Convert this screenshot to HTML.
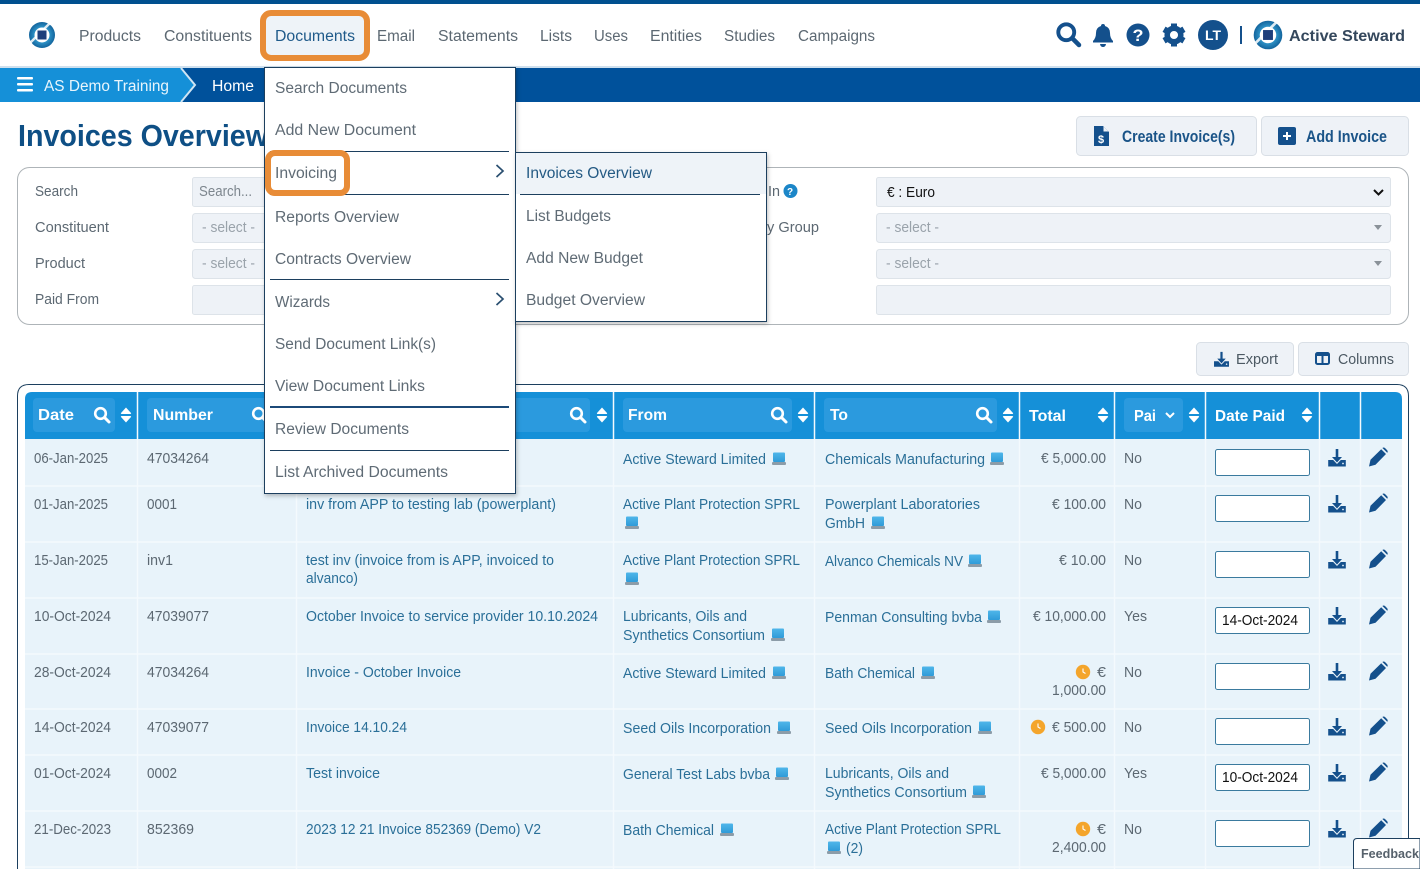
<!DOCTYPE html>
<html lang="en">
<head>
<meta charset="utf-8">
<title>Invoices Overview</title>
<style>
html,body{margin:0;padding:0;width:1420px;height:869px;overflow:hidden;background:#fff}
svg{display:block}
text{font-family:"Liberation Sans",Arial,sans-serif;font-size:15px;fill:#5c6872}
.n{font-size:15.5px;fill:#5c6872}
.m{font-size:15.5px;fill:#5f6b75}
.l{fill:#2a6f98}
.h{font-weight:bold;fill:#fff;font-size:15.5px}
.b{font-weight:bold;fill:#1a5488;font-size:16.5px}
.g{fill:#9aa3ab}
.d{fill:#4c5963}
</style>
</head>
<body>
<svg width="1420" height="869" viewBox="0 0 1420 869" xmlns="http://www.w3.org/2000/svg">
<defs>
<radialGradient id="lg" cx="50%" cy="50%" r="55%"><stop offset="0" stop-color="#7cc8ea"/><stop offset=".55" stop-color="#2b8fc4"/><stop offset="1" stop-color="#0d5a93"/></radialGradient>
<linearGradient id="sc" x1="0" y1="0" x2="0" y2="1"><stop offset="0" stop-color="#4fb6ea"/><stop offset="1" stop-color="#2f9bd8"/></linearGradient>
<g id="logo"><circle r="13" fill="url(#lg)"/><path d="M-12 8 L8 -12" stroke="#fff" stroke-width="2.5" opacity=".85"/><circle r="7.5" fill="#fff"/><rect x="-4.5" y="-4.5" width="9" height="9" fill="#1d3f7c"/></g>
<g id="srch" fill="none" stroke-linecap="round"><circle cx="-1.5" cy="-1.5" r="5.3" stroke-width="2.6"/><path d="M2.6 2.6 L7 7" stroke-width="3"/></g>
<g id="sort" fill="#fff"><path d="M0-7.5 L5-2 Q5.500-1 4-1 L-4-1 Q-5.500-1-5-2Z"/><path d="M0 7.500 L5 2 Q5.500 1 4 1 L-4 1 Q-5.500 1-5 2Z"/></g>
<g id="dl" fill="#14508c"><path d="M-1.300-9 H1.300 V-1 H5 L0 4.500 L-5-1 H-1.300Z"/><path d="M-8.800 2 H-3.800 L0 6 L3.800 2 H8.800 V8.500 H-8.800Z"/><circle cx="6" cy="5.500" r=".9" fill="#e8f3fa"/></g>
<path id="pen" fill="#14508c" d="M-9 9.500 L-7.500 2.800 L3.200-7.800 L8 -3 L-2.500 7.800Z M4.400-9 Q5.600-10 7-9 L9.200-6.800 Q10.200-5.400 9.200-4.200 Z"/>
<g id="lap"><rect x="-6" y="-6.500" width="12" height="9.500" rx="1" fill="url(#sc)"/><rect x="-7" y="3" width="14" height="3" rx="1" fill="#8c9ca8"/></g>
<g id="clk"><circle r="7.200" fill="#f4a52b"/><path d="M0-3.500 V0 L2.500 1.500" stroke="#fff" stroke-width="1.100" fill="none"/></g>
<path id="chev" d="M-3.500-6 L3 0 L-3.500 6" fill="none" stroke="#2a4f70" stroke-width="1.700"/>
</defs>

<!-- top -->
<rect width="1420" height="869" fill="#fff"/>
<rect width="1420" height="4" fill="#00508f"/>
<rect y="66" width="1420" height="2" fill="#cfe0ee"/>
<use href="#logo" x="42" y="35"/>
<text class="n" x="79" y="41" textLength="62" lengthAdjust="spacingAndGlyphs">Products</text>
<text class="n" x="164" y="41" textLength="88" lengthAdjust="spacingAndGlyphs">Constituents</text>
<rect x="263" y="13" width="104" height="45" rx="8" fill="#eef3f8" stroke="#e88c37" stroke-width="6"/>
<text class="n" x="275" y="41" textLength="80" lengthAdjust="spacingAndGlyphs" style="fill:#1f5a8a">Documents</text>
<text class="n" x="377" y="41" textLength="38" lengthAdjust="spacingAndGlyphs">Email</text>
<text class="n" x="438" y="41" textLength="80" lengthAdjust="spacingAndGlyphs">Statements</text>
<text class="n" x="540" y="41" textLength="32" lengthAdjust="spacingAndGlyphs">Lists</text>
<text class="n" x="594" y="41" textLength="34" lengthAdjust="spacingAndGlyphs">Uses</text>
<text class="n" x="650" y="41" textLength="52" lengthAdjust="spacingAndGlyphs">Entities</text>
<text class="n" x="724" y="41" textLength="51" lengthAdjust="spacingAndGlyphs">Studies</text>
<text class="n" x="798" y="41" textLength="77" lengthAdjust="spacingAndGlyphs">Campaigns</text>

<!-- right icons -->
<g transform="translate(1068.500 34.500) scale(1.500)" stroke="#14508c"><use href="#srch"/></g>
<path fill="#14508c" d="M1103 24 Q1105 24 1105 26 Q1110 27.500 1110 33 Q1110 38 1113 41 V42.500 H1093 V41 Q1096 38 1096 33 Q1096 27.500 1101 26 Q1101 24 1103 24Z M1100 44 H1106 Q1105.500 47 1103 47 Q1100.500 47 1100 44Z"/>
<circle cx="1138" cy="35" r="11.500" fill="#14508c"/>
<text x="1132.500" y="41" textLength="11" lengthAdjust="spacingAndGlyphs" style="font-weight:bold;font-size:17px;fill:#fff">?</text>
<g transform="translate(1174 35)"><circle r="6.800" fill="none" stroke="#14508c" stroke-width="5.500"/><g fill="#14508c"><rect x="-3" y="-11.500" width="6" height="5"/><rect x="-3" y="-11.500" width="6" height="5" transform="rotate(60)"/><rect x="-3" y="-11.500" width="6" height="5" transform="rotate(120)"/><rect x="-3" y="-11.500" width="6" height="5" transform="rotate(180)"/><rect x="-3" y="-11.500" width="6" height="5" transform="rotate(240)"/><rect x="-3" y="-11.500" width="6" height="5" transform="rotate(300)"/></g></g>
<circle cx="1213" cy="35" r="15" fill="#14508c"/>
<text x="1205" y="40" textLength="16" lengthAdjust="spacingAndGlyphs" style="font-weight:bold;font-size:14px;fill:#fff">LT</text>
<rect x="1240" y="26" width="2" height="18" fill="#14508c"/>
<use href="#logo" transform="translate(1268 35) scale(1.100)"/>
<text x="1289" y="41" textLength="116" lengthAdjust="spacingAndGlyphs" style="font-weight:bold;font-size:16px;fill:#34475c">Active Steward</text>

<!-- breadcrumb -->
<rect y="68" width="1420" height="34" fill="#00519b"/>
<path d="M0 68 H181 L195 85 L181 102 H0Z" fill="#1590d8"/>
<path d="M181 68 L195 85 L181 102" fill="none" stroke="#cfe4f3" stroke-width="2"/>
<rect x="17" y="77" width="16" height="2.500" rx="1" fill="#fff"/><rect x="17" y="83" width="16" height="2.500" rx="1" fill="#fff"/><rect x="17" y="89" width="16" height="2.500" rx="1" fill="#fff"/>
<text x="44" y="91" textLength="125" lengthAdjust="spacingAndGlyphs" style="font-size:15.500px;fill:#e8f5fc">AS Demo Training</text>
<text x="212" y="91" textLength="42" lengthAdjust="spacingAndGlyphs" style="font-size:15.500px;fill:#fff">Home</text>

<!-- title and buttons -->
<text x="18" y="146" textLength="250" lengthAdjust="spacingAndGlyphs" style="font-weight:bold;font-size:31px;fill:#0e4f85">Invoices Overview</text>
<rect x="1076.500" y="116.500" width="180" height="39" rx="4" fill="#eef2f7" stroke="#d9dfe6"/>
<rect x="1261.500" y="116.500" width="147" height="39" rx="4" fill="#eef2f7" stroke="#d9dfe6"/>
<path fill="#14508c" d="M1094 126 H1103 L1109 132 V146 H1094Z"/>
<path fill="#eef2f7" d="M1103.500 126.500 L1108.500 131.500 H1103.500Z"/>
<text x="1098" y="143" style="font-size:11px;font-weight:bold;fill:#fff">$</text>
<text class="b" x="1122" y="142" textLength="113" lengthAdjust="spacingAndGlyphs">Create Invoice(s)</text>
<rect x="1278" y="127" width="18" height="18" rx="2" fill="#14508c"/>
<path d="M1287 132 V140 M1283 136 H1291" stroke="#fff" stroke-width="2"/>
<text class="b" x="1306" y="142" textLength="81" lengthAdjust="spacingAndGlyphs">Add Invoice</text>

<!-- filters -->
<rect x="17.500" y="167.500" width="1391" height="157" rx="12" fill="#fff" stroke="#aeb4b8"/>
<text x="35" y="196" textLength="43" lengthAdjust="spacingAndGlyphs">Search</text>
<text x="35" y="232" textLength="74" lengthAdjust="spacingAndGlyphs">Constituent</text>
<text x="35" y="268" textLength="50" lengthAdjust="spacingAndGlyphs">Product</text>
<text x="35" y="304" textLength="64" lengthAdjust="spacingAndGlyphs">Paid From</text>
<g fill="#eef2f7" stroke="#dde3e9">
<rect x="192.500" y="177.500" width="100" height="29" rx="2"/>
<rect x="192.500" y="213.500" width="100" height="29" rx="3"/>
<rect x="192.500" y="249.500" width="100" height="29" rx="3"/>
<rect x="192.500" y="285.500" width="100" height="29" rx="2"/>
<rect x="876.500" y="177.500" width="514" height="29" rx="2"/>
<rect x="876.500" y="213.500" width="514" height="29" rx="3"/>
<rect x="876.500" y="249.500" width="514" height="29" rx="3"/>
<rect x="876.500" y="285.500" width="514" height="29" rx="2"/>
</g>
<text class="g" x="199" y="196" textLength="53" lengthAdjust="spacingAndGlyphs" style="fill:#7d868e">Search...</text>
<text class="g" x="202" y="232" textLength="53" lengthAdjust="spacingAndGlyphs">- select -</text>
<text class="g" x="202" y="268" textLength="53" lengthAdjust="spacingAndGlyphs">- select -</text>
<text x="768" y="196" textLength="12" lengthAdjust="spacingAndGlyphs">In</text>
<circle cx="790.500" cy="191" r="7" fill="#1c86c8"/>
<text x="787" y="195" style="font-size:10px;font-weight:bold;fill:#fff">?</text>
<text x="767" y="232" textLength="52" lengthAdjust="spacingAndGlyphs">y Group</text>
<text x="887" y="197" textLength="48" lengthAdjust="spacingAndGlyphs" style="fill:#111">€ : Euro</text>
<path d="M1374 190 L1378.500 194.500 L1383 190" fill="none" stroke="#111" stroke-width="2"/>
<text class="g" x="886" y="232" textLength="53" lengthAdjust="spacingAndGlyphs">- select -</text>
<text class="g" x="886" y="268" textLength="53" lengthAdjust="spacingAndGlyphs">- select -</text>
<path d="M1374 225 H1382 L1378 230Z M1374 261 H1382 L1378 266Z" fill="#8a9299"/>

<!-- export -->
<rect x="1196.500" y="342.500" width="97" height="33" rx="4" fill="#eef2f7" stroke="#d9dfe6"/>
<rect x="1298.500" y="342.500" width="110" height="33" rx="4" fill="#eef2f7" stroke="#d9dfe6"/>
<use href="#dl" transform="translate(1221.500 359.500) scale(.85)"/>
<text class="d" x="1236" y="364" textLength="42" lengthAdjust="spacingAndGlyphs">Export</text>
<rect x="1316" y="353" width="13" height="11" rx="1.500" fill="none" stroke="#14508c" stroke-width="2"/><path d="M1322.500 353 V364 M1316 355 H1329" stroke="#14508c" stroke-width="2"/>
<text class="d" x="1338" y="364" textLength="56" lengthAdjust="spacingAndGlyphs">Columns</text>

<!-- table -->
<path d="M17.500 869 V396 Q17.500 384.500 29 384.500 H1397 Q1408.500 384.500 1408.500 396 V869" fill="#fff" stroke="#1c3f5e"/>
<rect x="25" y="439" width="1377" height="430" fill="#e8f3fa"/>
<path d="M25 439 V399 Q25 392 32 392 H1395 Q1402 392 1402 399 V439Z" fill="#1590d8"/>
<g fill="#2b9ade">
<rect x="33" y="398" width="82" height="34" rx="4"/>
<rect x="147" y="398" width="130" height="34" rx="4"/>
<rect x="306" y="398" width="284" height="34" rx="4"/>
<rect x="623" y="398" width="169" height="34" rx="4"/>
<rect x="824" y="398" width="173" height="34" rx="4"/>
<rect x="1124" y="398" width="59" height="34" rx="4"/>
</g>
<g stroke="#f4fafd" stroke-width="1.500">
<path d="M137.500 392 V869 M296.500 392 V869 M613.500 392 V869 M814.500 392 V869 M1019.500 392 V869 M1114.500 392 V869 M1205.500 392 V869 M1319.500 392 V869 M1360.500 392 V869"/>
<path d="M25 486 H1402 M25 542 H1402 M25 598 H1402 M25 654 H1402 M25 709 H1402 M25 755 H1402 M25 811 H1402 M25 867 H1402"/>
</g>
<text class="h" x="38" y="420" textLength="36" lengthAdjust="spacingAndGlyphs">Date</text>
<text class="h" x="153" y="420" textLength="60" lengthAdjust="spacingAndGlyphs">Number</text>
<text class="h" x="628" y="420" textLength="39" lengthAdjust="spacingAndGlyphs">From</text>
<text class="h" x="830" y="420" textLength="18" lengthAdjust="spacingAndGlyphs">To</text>
<text class="h" x="1029" y="421" textLength="37" lengthAdjust="spacingAndGlyphs">Total</text>
<text class="h" x="1134" y="421" textLength="22" lengthAdjust="spacingAndGlyphs">Pai</text>
<text class="h" x="1215" y="421" textLength="70" lengthAdjust="spacingAndGlyphs">Date Paid</text>
<g stroke="#fff"><use href="#srch" x="102" y="415"/><use href="#srch" x="260" y="415"/><use href="#srch" x="578" y="415"/><use href="#srch" x="779" y="415"/><use href="#srch" x="984" y="415"/></g>
<path d="M1166 413 L1170 417 L1174 413" fill="none" stroke="#fff" stroke-width="2"/>
<use href="#sort" x="126" y="415"/><use href="#sort" x="602" y="415"/><use href="#sort" x="803" y="415"/><use href="#sort" x="1008" y="415"/><use href="#sort" x="1103" y="415"/><use href="#sort" x="1194" y="415"/><use href="#sort" x="1307" y="415"/>

<!-- row 1 -->
<text x="34" y="463" textLength="74" lengthAdjust="spacingAndGlyphs">06-Jan-2025</text>
<text x="147" y="463" textLength="62" lengthAdjust="spacingAndGlyphs">47034264</text>
<text class="l" x="623" y="464" textLength="143" lengthAdjust="spacingAndGlyphs">Active Steward Limited</text><use href="#lap" x="779" y="459"/>
<text class="l" x="825" y="464" textLength="160" lengthAdjust="spacingAndGlyphs">Chemicals Manufacturing</text><use href="#lap" x="997" y="459"/>
<text x="1041" y="463" textLength="65" lengthAdjust="spacingAndGlyphs">€ 5,000.00</text>
<text x="1124" y="463" textLength="18" lengthAdjust="spacingAndGlyphs">No</text>
<!-- row 2 -->
<text x="34" y="509" textLength="74" lengthAdjust="spacingAndGlyphs">01-Jan-2025</text>
<text x="147" y="509" textLength="30" lengthAdjust="spacingAndGlyphs">0001</text>
<text class="l" x="306" y="509" textLength="250" lengthAdjust="spacingAndGlyphs">inv from APP to testing lab (powerplant)</text>
<text class="l" x="623" y="509" textLength="177" lengthAdjust="spacingAndGlyphs">Active Plant Protection SPRL</text><use href="#lap" x="632" y="523"/>
<text class="l" x="825" y="509" textLength="155" lengthAdjust="spacingAndGlyphs">Powerplant Laboratories</text>
<text class="l" x="825" y="528" textLength="40" lengthAdjust="spacingAndGlyphs">GmbH</text><use href="#lap" x="878" y="523"/>
<text x="1052" y="509" textLength="54" lengthAdjust="spacingAndGlyphs">€ 100.00</text>
<text x="1124" y="509" textLength="18" lengthAdjust="spacingAndGlyphs">No</text>
<!-- row 3 -->
<text x="34" y="565" textLength="74" lengthAdjust="spacingAndGlyphs">15-Jan-2025</text>
<text x="147" y="565" textLength="26" lengthAdjust="spacingAndGlyphs">inv1</text>
<text class="l" x="306" y="565" textLength="248" lengthAdjust="spacingAndGlyphs">test inv (invoice from is APP, invoiced to</text>
<text class="l" x="306" y="583" textLength="52" lengthAdjust="spacingAndGlyphs">alvanco)</text>
<text class="l" x="623" y="565" textLength="177" lengthAdjust="spacingAndGlyphs">Active Plant Protection SPRL</text><use href="#lap" x="632" y="579"/>
<text class="l" x="825" y="566" textLength="138" lengthAdjust="spacingAndGlyphs">Alvanco Chemicals NV</text><use href="#lap" x="975" y="561"/>
<text x="1059" y="565" textLength="47" lengthAdjust="spacingAndGlyphs">€ 10.00</text>
<text x="1124" y="565" textLength="18" lengthAdjust="spacingAndGlyphs">No</text>
<!-- row 4 -->
<text x="34" y="621" textLength="77" lengthAdjust="spacingAndGlyphs">10-Oct-2024</text>
<text x="147" y="621" textLength="62" lengthAdjust="spacingAndGlyphs">47039077</text>
<text class="l" x="306" y="621" textLength="292" lengthAdjust="spacingAndGlyphs">October Invoice to service provider 10.10.2024</text>
<text class="l" x="623" y="621" textLength="124" lengthAdjust="spacingAndGlyphs">Lubricants, Oils and</text>
<text class="l" x="623" y="640" textLength="142" lengthAdjust="spacingAndGlyphs">Synthetics Consortium</text><use href="#lap" x="778" y="635"/>
<text class="l" x="825" y="622" textLength="157" lengthAdjust="spacingAndGlyphs">Penman Consulting bvba</text><use href="#lap" x="994" y="617"/>
<text x="1033" y="621" textLength="73" lengthAdjust="spacingAndGlyphs">€ 10,000.00</text>
<text x="1124" y="621" textLength="23" lengthAdjust="spacingAndGlyphs">Yes</text>
<!-- row 5 -->
<text x="34" y="677" textLength="77" lengthAdjust="spacingAndGlyphs">28-Oct-2024</text>
<text x="147" y="677" textLength="62" lengthAdjust="spacingAndGlyphs">47034264</text>
<text class="l" x="306" y="677" textLength="155" lengthAdjust="spacingAndGlyphs">Invoice - October Invoice</text>
<text class="l" x="623" y="678" textLength="143" lengthAdjust="spacingAndGlyphs">Active Steward Limited</text><use href="#lap" x="779" y="673"/>
<text class="l" x="825" y="678" textLength="90" lengthAdjust="spacingAndGlyphs">Bath Chemical</text><use href="#lap" x="928" y="673"/>
<use href="#clk" x="1083" y="672"/>
<text x="1097" y="677" textLength="9" lengthAdjust="spacingAndGlyphs">€</text>
<text x="1052" y="695" textLength="54" lengthAdjust="spacingAndGlyphs">1,000.00</text>
<text x="1124" y="677" textLength="18" lengthAdjust="spacingAndGlyphs">No</text>
<!-- row 6 -->
<text x="34" y="732" textLength="77" lengthAdjust="spacingAndGlyphs">14-Oct-2024</text>
<text x="147" y="732" textLength="62" lengthAdjust="spacingAndGlyphs">47039077</text>
<text class="l" x="306" y="732" textLength="101" lengthAdjust="spacingAndGlyphs">Invoice 14.10.24</text>
<text class="l" x="623" y="733" textLength="148" lengthAdjust="spacingAndGlyphs">Seed Oils Incorporation</text><use href="#lap" x="784" y="728"/>
<text class="l" x="825" y="733" textLength="147" lengthAdjust="spacingAndGlyphs">Seed Oils Incorporation</text><use href="#lap" x="985" y="728"/>
<use href="#clk" x="1038" y="727"/>
<text x="1052" y="732" textLength="54" lengthAdjust="spacingAndGlyphs">€ 500.00</text>
<text x="1124" y="732" textLength="18" lengthAdjust="spacingAndGlyphs">No</text>
<!-- row 7 -->
<text x="34" y="778" textLength="77" lengthAdjust="spacingAndGlyphs">01-Oct-2024</text>
<text x="147" y="778" textLength="30" lengthAdjust="spacingAndGlyphs">0002</text>
<text class="l" x="306" y="778" textLength="74" lengthAdjust="spacingAndGlyphs">Test invoice</text>
<text class="l" x="623" y="779" textLength="147" lengthAdjust="spacingAndGlyphs">General Test Labs bvba</text><use href="#lap" x="782" y="774"/>
<text class="l" x="825" y="778" textLength="124" lengthAdjust="spacingAndGlyphs">Lubricants, Oils and</text>
<text class="l" x="825" y="797" textLength="142" lengthAdjust="spacingAndGlyphs">Synthetics Consortium</text><use href="#lap" x="979" y="792"/>
<text x="1041" y="778" textLength="65" lengthAdjust="spacingAndGlyphs">€ 5,000.00</text>
<text x="1124" y="778" textLength="23" lengthAdjust="spacingAndGlyphs">Yes</text>
<!-- row 8 -->
<text x="34" y="834" textLength="77" lengthAdjust="spacingAndGlyphs">21-Dec-2023</text>
<text x="147" y="834" textLength="47" lengthAdjust="spacingAndGlyphs">852369</text>
<text class="l" x="306" y="834" textLength="235" lengthAdjust="spacingAndGlyphs">2023 12 21 Invoice 852369 (Demo) V2</text>
<text class="l" x="623" y="835" textLength="91" lengthAdjust="spacingAndGlyphs">Bath Chemical</text><use href="#lap" x="727" y="830"/>
<text class="l" x="825" y="834" textLength="176" lengthAdjust="spacingAndGlyphs">Active Plant Protection SPRL</text>
<use href="#lap" x="834" y="848"/><text class="l" x="846" y="853" textLength="17" lengthAdjust="spacingAndGlyphs">(2)</text>
<use href="#clk" x="1083" y="829"/>
<text x="1097" y="834" textLength="9" lengthAdjust="spacingAndGlyphs">€</text>
<text x="1052" y="852" textLength="54" lengthAdjust="spacingAndGlyphs">2,400.00</text>
<text x="1124" y="834" textLength="18" lengthAdjust="spacingAndGlyphs">No</text>

<!-- date inputs -->
<g fill="#fff" stroke="#3a7a9e">
<rect x="1215.500" y="449.500" width="94" height="26" rx="2"/>
<rect x="1215.500" y="495.500" width="94" height="26" rx="2"/>
<rect x="1215.500" y="551.500" width="94" height="26" rx="2"/>
<rect x="1215.500" y="607.500" width="94" height="26" rx="2"/>
<rect x="1215.500" y="663.500" width="94" height="26" rx="2"/>
<rect x="1215.500" y="718.500" width="94" height="26" rx="2"/>
<rect x="1215.500" y="764.500" width="94" height="26" rx="2"/>
<rect x="1215.500" y="820.500" width="94" height="26" rx="2"/>
</g>
<text x="1222" y="625" textLength="76" lengthAdjust="spacingAndGlyphs" style="fill:#111">14-Oct-2024</text>
<text x="1222" y="782" textLength="76" lengthAdjust="spacingAndGlyphs" style="fill:#111">10-Oct-2024</text>
<use href="#dl" x="1337" y="458"/><use href="#dl" x="1337" y="504"/><use href="#dl" x="1337" y="560"/><use href="#dl" x="1337" y="616"/><use href="#dl" x="1337" y="672"/><use href="#dl" x="1337" y="727"/><use href="#dl" x="1337" y="773"/><use href="#dl" x="1337" y="829"/>
<use href="#pen" x="1378" y="457"/><use href="#pen" x="1378" y="503"/><use href="#pen" x="1378" y="559"/><use href="#pen" x="1378" y="615"/><use href="#pen" x="1378" y="671"/><use href="#pen" x="1378" y="726"/><use href="#pen" x="1378" y="772"/><use href="#pen" x="1378" y="828"/>

<!-- dropdown -->
<rect x="264.500" y="67.500" width="251" height="426" fill="#fff" stroke="#1c3f5e" style="filter:drop-shadow(1px 2px 2px rgba(0,0,0,.25))"/>
<text class="m" x="275" y="93" textLength="132" lengthAdjust="spacingAndGlyphs">Search Documents</text>
<text class="m" x="275" y="135" textLength="141" lengthAdjust="spacingAndGlyphs">Add New Document</text>
<path d="M270 151.500 H509 M270 194.500 H509 M270 279.500 H509 M270 450.500 H509" stroke="#1c3f5e"/>
<path d="M270 407 H509" stroke="#1c4a78" stroke-width="2"/>
<rect x="268" y="153" width="79" height="40" rx="7" fill="#fff" stroke="#e88c37" stroke-width="6"/>
<text class="m" x="275" y="178" textLength="62" lengthAdjust="spacingAndGlyphs">Invoicing</text>
<use href="#chev" x="500" y="171"/>
<text class="m" x="275" y="222" textLength="124" lengthAdjust="spacingAndGlyphs">Reports Overview</text>
<text class="m" x="275" y="264" textLength="136" lengthAdjust="spacingAndGlyphs">Contracts Overview</text>
<text class="m" x="275" y="307" textLength="55" lengthAdjust="spacingAndGlyphs">Wizards</text>
<use href="#chev" x="500" y="299"/>
<text class="m" x="275" y="349" textLength="161" lengthAdjust="spacingAndGlyphs">Send Document Link(s)</text>
<text class="m" x="275" y="391" textLength="150" lengthAdjust="spacingAndGlyphs">View Document Links</text>
<text class="m" x="275" y="434" textLength="134" lengthAdjust="spacingAndGlyphs">Review Documents</text>
<text class="m" x="275" y="477" textLength="173" lengthAdjust="spacingAndGlyphs">List Archived Documents</text>

<!-- submenu -->
<rect x="515.500" y="152.500" width="251" height="169" fill="#fff" stroke="#1c3f5e" style="filter:drop-shadow(1px 2px 2px rgba(0,0,0,.25))"/>
<rect x="516" y="153" width="250" height="41" fill="#eef3f8"/>
<path d="M520 194.500 H760" stroke="#1c3f5e"/>
<text class="m" x="526" y="178" textLength="126" lengthAdjust="spacingAndGlyphs" style="fill:#245a84">Invoices Overview</text>
<text class="m" x="526" y="221" textLength="85" lengthAdjust="spacingAndGlyphs">List Budgets</text>
<text class="m" x="526" y="263" textLength="117" lengthAdjust="spacingAndGlyphs">Add New Budget</text>
<text class="m" x="526" y="305" textLength="119" lengthAdjust="spacingAndGlyphs">Budget Overview</text>

<!-- feedback -->
<path d="M1420 838.500 H1357 Q1353.500 838.500 1353.500 842 V869 H1420Z" fill="#fff" stroke="#1c3f5e"/>
<text x="1361" y="858" textLength="58" lengthAdjust="spacingAndGlyphs" style="font-weight:bold;font-size:13px;fill:#56616b">Feedback</text>
</svg>
</body>
</html>
